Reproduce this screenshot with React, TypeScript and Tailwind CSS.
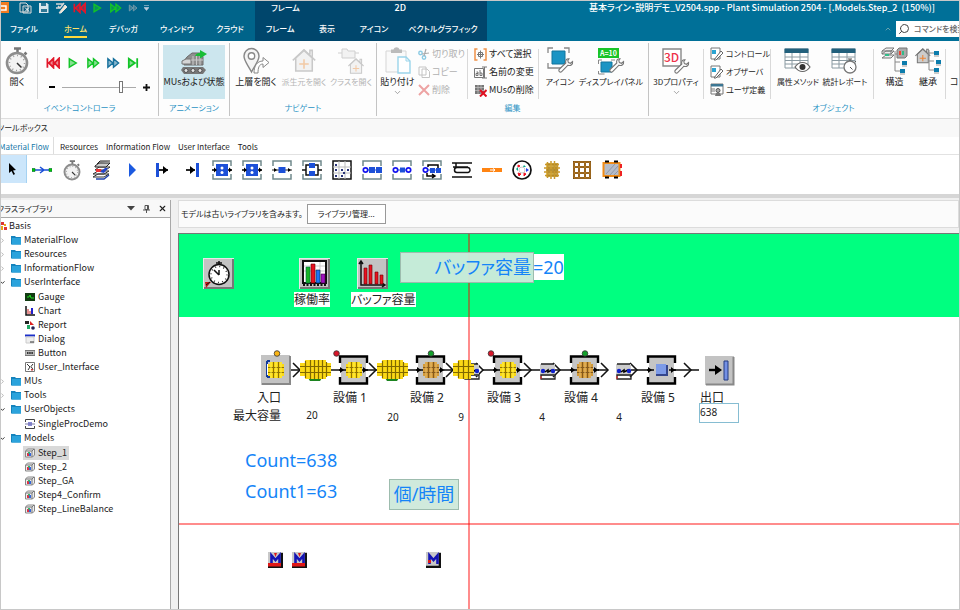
import { useState } from 'react'
import type { ReactNode } from 'react'
import { ChevronDown, ChevronRight, ChevronUp, Search, X } from 'lucide-react'

type IconProps = { w?: number; h?: number; children: ReactNode; box?: string; className?: string }

function Icon({ w = 20, h = 20, box, children, className = '' }: IconProps) {
  return (
    <svg width={w} height={h} viewBox={box ?? `0 0 ${w} ${h}`} fill="none" aria-hidden="true" className={`shrink-0 ${className}`}>
      {children}
    </svg>
  )
}

/* ---------- shared drawings ---------- */

function Stopwatch({ w, h }: { w: number; h: number }) {
  return (
    <Icon w={w} h={h} box="0 0 24 28">
      <path d="M9 1.500h7M12.500 2v4M19.500 5.500l2 2" stroke="#777" strokeWidth="2.500" />
      <circle cx="12" cy="16" r="10" fill="#f3f3f3" stroke="#8d8d8d" strokeWidth="2.600" />
      <circle cx="12" cy="16" r="7.500" stroke="#999" strokeWidth="1.500" strokeDasharray="1 2.900" />
      <path d="M12 16l4.500 4.500" stroke="#333" strokeWidth="1.500" />
    </Icon>
  )
}

function Wrench({ x, y }: { x: number; y: number }) {
  return (
    <path
      transform={`translate(${x} ${y})`}
      d="M11 0.800C8.500 0.500 7 2.500 7.800 5L1.500 11c-1.800 1.800.6 4.200 2.400 2.400L10 7.200c2.800 1 5-1 4.600-3.600L12.500 5.300 10.400 4.600 9.800 2.600z"
      fill="#fff"
      stroke="#777"
      strokeWidth="1.100"
    />
  )
}

function House({ x, y, faded }: { x: number; y: number; faded?: boolean }) {
  return (
    <g transform={`translate(${x} ${y})`} stroke={faded ? '#c9c9c9' : '#777'} strokeWidth="1.300">
      <path d="M3 8v11h14V8L10 1.500z" fill={faded ? '#f2f2f2' : '#ccc'} />
      <path d="M0.500 10L10 1l9.500 9M15 5V1.500h2V7" fill="none" />
      <path d="M10 9v8M6 13h8" stroke={faded ? '#f2c9a5' : '#ee8333'} />
    </g>
  )
}

function BlueNodes({ x, y }: { x: number; y: number }) {
  return (
    <g transform={`translate(${x} ${y})`}>
      <path d="M1 0v20h5M1 11h5M1 3h5" stroke="#888" />
      <path d="M6 1h5v4H6zM8 10h5v4H8zM6 18h5v4H6z" fill="#0b7cac" />
      <path d="M6 6h5M8 15h5M6 23h5" stroke="#999" />
    </g>
  )
}

const stack = (
  <>
    <path d="M1 14l5-3h11l-5 3zM1 17l5-3h11l-5 3zM3 10l4-3h11l-4 3z" fill="#fff" stroke="#333" />
    <path d="M3 6l4-3h11l-4 4H3zM5 4l3-3h10" fill="#ccc" stroke="#222" />
    <path d="M4 9h5v3H4z" fill="#e33" />
    <path d="M8 12l5-4h3l-4 5z" fill="#24c" />
    <path d="M4 19h8l5-4" stroke="#24a" strokeWidth="1.500" />
  </>
)

/* ---------- ribbon ---------- */

const transport = [
  { label: 'リセット', color: '#e2172a', d: 'M1.500 1v10M8 1L3 6l5 5zM14 1L9 6l5 5z', bold: true },
  { label: '開始', color: '#12c427', d: 'M3.500 1.500v9L11 6z' },
  { label: '早送り', color: '#12c427', d: 'M2 1.500v9L7.500 6zM8 1.500v9L13.500 6z' },
  { label: '最速', color: '#16709c', d: 'M2 1.500v9L7.500 6zM8 1.500v9L13.500 6z' },
  { label: 'ステップ', color: '#12c427', d: 'M3 1.500v9L9.500 6zM12 1v10', bold: true },
]

function Transport({ index, size = 14 }: { index: number; size?: number }) {
  const t = transport[index]
  return (
    <Icon w={size} h={12} box="0 0 15 12">
      <path d={t.d} stroke={t.color} strokeWidth={t.bold ? 1.900 : 1.500} fill={t.color} fillOpacity={0.5} />
    </Icon>
  )
}

type BigButtonProps = { icon: ReactNode; label: string; className: string; faded?: boolean; arrow?: boolean; small?: boolean }

function BigButton({ icon, label, className, faded, arrow, small }: BigButtonProps) {
  return (
    <button type="button" disabled={faded} className={`flex h-[54px] shrink-0 flex-col items-center whitespace-nowrap ${className} ${faded ? 'text-[#b5b5b5]' : ''}`}>
      <span className="flex h-[30px] items-end justify-center">{icon}</span>
      <span className={small ? 'mt-px text-[8px] leading-3' : 'mt-px leading-3'}>{label}</span>
      {arrow && <ChevronDown size={9} className="text-[#888]" />}
    </button>
  )
}

function SmallButton({ icon, label, faded, small }: { icon: ReactNode; label: string; faded?: boolean; small?: boolean }) {
  return (
    <button type="button" disabled={faded} className={`flex h-[18px] items-center gap-0.5 whitespace-nowrap ${small ? 'text-[8px]' : ''} ${faded ? 'text-[#b0b0b0]' : ''}`}>
      {icon}
      {label}
    </button>
  )
}

function Group({ label, className, children }: { label: string; className: string; children: ReactNode }) {
  return (
    <section aria-label={label} className={`my-0.5 flex shrink-0 flex-col border-r border-[#c4c4c4] ${className}`}>
      <div className="flex h-[58px] items-start pt-0.5">{children}</div>
      <div className="text-center text-[8px] leading-4 text-[#2b93c4]">{label}</div>
    </section>
  )
}

const Divider = () => <div className="mt-1 h-[50px] w-px shrink-0 bg-[#d9d9d9]" />

const editIcon = (
  <Icon w={14} h={14}>
    <path d="M1 1h9v11H1z" fill="#fff" stroke="#777" />
    <path d="M2 3h4v4H2z" fill="#2aa4d2" />
    <path d="M4 13l7-9 2 2-7 7z" fill="#fff" stroke="#666" />
  </Icon>
)

function Ribbon() {
  const [speed, setSpeed] = useState(82)
  return (
    <div className="flex h-[78px] overflow-hidden border-b border-[#dedede] bg-[#fdfdfd] text-[9px] text-[#222]">
      <Group label="イベントコントローラ" className="w-[158px]">
        <BigButton icon={<Stopwatch w={24} h={28} />} label="開く" className="w-[32px]" />
        <div className="ml-1"><Divider /></div>
        <div className="flex flex-1 flex-col pt-3 pl-2">
          <div className="flex gap-1.5">
            {transport.map((t, i) => (
              <button key={t.label} type="button" aria-label={t.label}>
                <Transport index={i} />
              </button>
            ))}
          </div>
          <div className="mt-3 flex items-center gap-1">
            <button type="button" aria-label="遅く" className="flex h-3 w-3 items-center justify-center">
              <span className="h-0.5 w-1.5 bg-black" />
            </button>
            <input
              type="range"
              aria-label="速度"
              value={speed}
              onChange={e => setSpeed(Number(e.target.value))}
              className="h-3 w-[74px] appearance-none bg-[linear-gradient(#aaa,#aaa)] bg-[length:100%_1px] bg-center bg-no-repeat [&::-webkit-slider-thumb]:h-3 [&::-webkit-slider-thumb]:w-1 [&::-webkit-slider-thumb]:appearance-none [&::-webkit-slider-thumb]:border [&::-webkit-slider-thumb]:border-[#777] [&::-webkit-slider-thumb]:bg-white"
            />
            <button type="button" aria-label="速く" className="flex h-3 w-3 items-center justify-center">
              <Icon w={7} h={7}><path d="M0 3.500h7M3.500 0v7" stroke="#111" strokeWidth="1.800" /></Icon>
            </button>
          </div>
        </div>
      </Group>

      <Group label="アニメーション" className="w-[71px]">
        <BigButton
          className="ml-1 w-[62px] bg-[#cce6ee]"
          label="MUsおよび状態"
          icon={
            <Icon w={28} h={25}>
              <path d="M7 7l5-4h9l2 4v8H4v-4z" fill="#8f8f8f" stroke="#6a6a6a" />
              <path d="M2 11l4-2h5v5H2z" fill="#d5d5d5" stroke="#777" />
              <path d="M13 6v9M16.500 6v9M20 6v9M11 10h12" stroke="#c9c9c9" />
              <path d="M3 17h20l3 3-3 4H4l-3-4z" fill="#777" />
              <circle cx="6" cy="20.500" r="2" fill="#e4e4e4" stroke="#555" />
              <circle cx="13" cy="20.500" r="2" fill="#e4e4e4" stroke="#555" />
              <circle cx="20" cy="20.500" r="2" fill="#e4e4e4" stroke="#555" />
              <path d="M15 6c1-2.500 3-3 5-3V0l7 4-7 4.500V6z" fill="#18bd36" />
            </Icon>
          }
        />
      </Group>

      <Group label="ナビゲート" className="w-[147px]">
        <BigButton
          className="ml-0.5 w-[48px]"
          label="上層を開く"
          icon={
            <Icon w={27} h={28}>
              <path d="M8.500 25C5 18 1 14 1 9a7.500 7.500 0 0115 0c0 5-4 9-7.500 16z" fill="#f5f5f5" stroke="#888" strokeWidth="1.400" />
              <circle cx="8.500" cy="9" r="3.200" fill="#fff" stroke="#888" strokeWidth="1.400" />
              <path d="M11 26c0-7 3-12 9-12v-3.500l6 5-6 5V17c-4 0-5 4-5 9z" fill="#fff" stroke="#888" />
            </Icon>
          }
        />
        <BigButton
          faded
          small
          className="w-[48px]"
          label="派生元を開く"
          icon={<Icon w={26} h={28} box="-1 0 22 21"><House x={0} y={0} faded /></Icon>}
        />
        <BigButton
          faded
          small
          className="w-[46px]"
          label="クラスを開く"
          icon={
            <Icon w={26} h={28}>
              <path d="M4 2h5l1 2h7v7H4zM0 6h4M17 6h4" fill="#f2f2f2" stroke="#cfcfcf" />
              <g transform="translate(10 11) scale(.8)"><House x={0} y={0} faded /></g>
            </Icon>
          }
        />
      </Group>

      <Group label="編集" className="w-[272px]">
        <BigButton
          arrow
          className="w-[41px]"
          label="貼り付け"
          icon={
            <Icon w={26} h={28}>
              <path d="M1 4h20v21H1z" fill="#fafafa" stroke="#d5d5d5" />
              <path d="M6 6V2.500h2.500c1-3 5-3 6 0H17V6z" fill="#bbb" />
              <path d="M13 10h8l4 4v12H13z" fill="#fff" stroke="#9ad4ea" strokeWidth="1.400" />
              <path d="M21 10v4h4" stroke="#9ad4ea" />
            </Icon>
          }
        />
        <div className="flex w-[49px] shrink-0 flex-col">
          <SmallButton
            faded
            label="切り取り"
            icon={
              <Icon w={12} h={12}>
                <circle cx="2.500" cy="5" r="1.700" stroke="#8ccbe4" strokeWidth="1.400" />
                <circle cx="6" cy="9.500" r="1.700" stroke="#8ccbe4" strokeWidth="1.400" />
                <path d="M4 6l7-1M6 8L8 1" stroke="#aaa" strokeWidth="1.200" />
              </Icon>
            }
          />
          <SmallButton
            faded
            label="コピー"
            icon={<Icon w={12} h={12}><path d="M1 1h7v8H1zM4 3h5l2.500 2.500V11.500H4z" fill="#fff" stroke="#c4c4c4" /></Icon>}
          />
          <SmallButton
            faded
            label="削除"
            icon={<Icon w={12} h={12}><path d="M1 1l10 10M11 1L1 11" stroke="#eda3a3" strokeWidth="2" /></Icon>}
          />
        </div>
        <Divider />
        <div className="flex w-[70px] shrink-0 flex-col pl-1.5">
          <SmallButton
            label="すべて選択"
            icon={
              <Icon w={13} h={13}>
                <path d="M3.500 1H1v11h2.500M9.500 1H12v11H9.500" stroke="#ef9148" strokeWidth="1.500" />
                <path d="M6.500 2.500v8M3 6.500h7M4.500 4.500h4v4h-4z" stroke="#777" />
              </Icon>
            }
          />
          <SmallButton
            label="名前の変更"
            icon={
              <Icon w={13} h={13}>
                <path d="M.5 2.500h9v9h-9zM8 1h5M10.500 1v11M8 12h5" stroke="#777" />
                <path d="M2.500 6h1.500v3.500h-2v-2h2M6 4v5.500h2v-2.500H6" stroke="#555" strokeWidth=".8" />
              </Icon>
            }
          />
          <SmallButton
            label="MUsの削除"
            icon={
              <Icon w={13} h={13}>
                <path d="M1 1h9v9H1z" fill="#777" />
                <path d="M1 3.500h9M1 6.500h9M4 1v9M7 1v9" stroke="#bbb" strokeWidth=".8" />
                <path d="M6 6l6.500 6.500M12.500 6L6 12.500" stroke="#e01020" strokeWidth="2" />
              </Icon>
            }
          />
        </div>
        <Divider />
        <BigButton
          small
          className="w-[42px]"
          label="アイコン"
          icon={
            <Icon w={27} h={28}>
              <path d="M5 4h13v13H5z" fill="#1b94c4" stroke="#12749c" />
              <path d="M1 6V1h5M17 1h5v5M1 16v5h5M1 21h14" stroke="#888" strokeWidth="1.300" />
              <Wrench x={11} y={11} />
            </Icon>
          }
        />
        <BigButton
          small
          className="w-[60px]"
          label="ディスプレイパネル"
          icon={
            <Icon w={27} h={28}>
              <path d="M0 1h21v10H0z" fill="#19c428" />
              <path d="M3 15h11v10H3z" fill="#1b94c4" stroke="#12749c" />
              <path d="M.5 17v-4H4M13 13h4M.5 24v3h6" stroke="#888" />
              <Wrench x={11} y={11} />
              <text x="2" y="8.500" fontSize="7" fontWeight="700" fill="#fff">A=10</text>
            </Icon>
          }
        />
      </Group>

      <Group label="オブジェクト" className="w-[370px]">
        <BigButton
          arrow
          small
          className="w-[54px]"
          label="3Dプロパティ"
          icon={
            <Icon w={28} h={28}>
              <path d="M1 2h18v17H1z" fill="#fff" stroke="#888" strokeWidth="1.400" />
              <text x="2" y="15" fontSize="12" fontWeight="500" fill="#ee3148">3D</text>
              <Wrench x={12} y={12} />
            </Icon>
          }
        />
        <Divider />
        <div className="flex w-[66px] shrink-0 flex-col pl-1.5">
          <SmallButton small label="コントロール" icon={editIcon} />
          <SmallButton small label="オブザーバ" icon={editIcon} />
          <SmallButton
            small
            label="ユーザ定義"
            icon={
              <Icon w={14} h={14}>
                <path d="M1 1h12v10H1zM1 6h4M1 8h4" fill="#fff" stroke="#777" />
                <path d="M1 1h12v2.500H1z" fill="#3c7693" />
                <circle cx="8" cy="7.500" r="2" fill="#aaa" stroke="#555" />
                <path d="M5 13l1-3h4l1 3z" fill="#777" />
              </Icon>
            }
          />
        </div>
        <Divider />
        <BigButton
          small
          className="ml-1 w-[46px]"
          label="属性メソッド"
          icon={
            <Icon w={28} h={28}>
              <path d="M1 2h23v19H1zM1 10h23M1 13.500h23M1 17h23M8 5v16M16 5v16" fill="#fff" stroke="#8a9aa2" />
              <path d="M.5 1.500h24V6H.5z" fill="#22607c" />
              <path d="M11 20c4-6 11-6 15 0-4 6-11 6-15 0z" fill="#fff" stroke="#666" strokeWidth="1.200" />
              <circle cx="18.500" cy="20" r="3" fill="#333" />
            </Icon>
          }
        />
        <BigButton
          small
          className="w-[48px]"
          label="統計レポート"
          icon={
            <Icon w={28} h={28}>
              <path d="M1 2h23v19H1zM1 10h23M1 13.500h23M1 17h23M8 5v16M16 5v16" fill="#fff" stroke="#8a9aa2" />
              <path d="M.5 1.500h24V6H.5z" fill="#22607c" />
              <circle cx="19" cy="20" r="6" fill="#fff" stroke="#777" strokeWidth="1.300" />
              <path d="M17 12h4M19 12v2M19 20l2.500 2.500M24 14l1 1" stroke="#555" />
            </Icon>
          }
        />
        <div className="ml-1"><Divider /></div>
        <BigButton
          className="ml-1 w-[33px]"
          label="構造"
          icon={
            <Icon w={27} h={28}>
              <path d="M1 4l4-3h8l-3 3zM1 7l4-3h8l-3 3zM1 11l4-3h8l-3 3zM1 4v3M10 4v3" fill="#eee" stroke="#777" />
              <path d="M4 7h4v2H4z" fill="#3b8" />
              <BlueNodes x={13} y={4} />
              <path d="M16 3l2-2h8v8l-2 2h-8z" fill="#aaa" stroke="#777" />
              <path d="M18 4h2v4h-2z" fill="#e43" />
              <path d="M21 4h2v4h-2z" fill="#3b8" />
            </Icon>
          }
        />
        <BigButton
          className="w-[34px]"
          label="継承"
          icon={
            <Icon w={27} h={28}>
              <g transform="translate(0 1) scale(.78)"><House x={0} y={0} /></g>
              <BlueNodes x={13} y={3} />
            </Icon>
          }
        />
        <Divider />
        <button type="button" className="ml-1 w-[48px] shrink-0 pt-[31px] text-left leading-3 whitespace-nowrap">コンテンツ</button>
      </Group>
    </div>
  )
}

/* ---------- title bar ---------- */

const mainTabs = ['ファイル', 'ホーム', 'デバッガ', 'ウィンドウ', 'クラウド']
const frameTabs = ['フレーム', '表示', 'アイコン', 'ベクトルグラフィック']

function TitleBar() {
  const [active, setActive] = useState('ホーム')
  return (
    <header className="grid h-10 grid-cols-[254px_232px_1fr] overflow-hidden text-[8px] font-medium whitespace-nowrap text-white">
      <div className="flex flex-col bg-[#00648a]">
        <div className="flex h-3.5 items-center">
          <Icon w={9} h={12} className="mr-1.5">
            <path d="M0 0h8v11H0z" fill="#f07c22" />
            <path d="M0 4h5v4H0" stroke="#fff" strokeWidth="1.500" />
          </Icon>
          <button type="button" aria-label="閉じる" className="flex w-[18px] justify-center">
            <Icon w={13} h={12}>
              <path d="M1 1h6l2 2v7H1zM4 4h8v7H4z" fill="#0a5c7c" stroke="#ddd" />
              <path d="M6 5.500l4 4M10 5.500l-4 4" stroke="#fff" />
            </Icon>
          </button>
          <button type="button" aria-label="保存" className="flex w-[18px] justify-center">
            <Icon w={11} h={12}>
              <path d="M1 1h8l1.500 1.500V11H1z" fill="#d9e6ec" />
              <path d="M3 1h5v3H3zM3 7h6v3H3z" fill="#2e7896" />
            </Icon>
          </button>
          <button type="button" aria-label="編集" className="flex w-[18px] justify-center">
            <Icon w={13} h={12}>
              <path d="M1 2h7M1 6h4M3 4l2 2 4-5" stroke="#d8d8d8" strokeWidth="1.500" />
              <path d="M4 11l6-8 2 2-6 6z" fill="#f6e8d2" stroke="#ddd" />
            </Icon>
          </button>
          {[0, 1, 2, 3].map(i => (
            <button
              key={i}
              type="button"
              aria-label={transport[i].label}
              className={i === 3 ? 'flex w-[18px] justify-center opacity-60 brightness-200 grayscale' : 'flex w-[18px] justify-center'}
            >
              <Transport index={i} size={i === 3 ? 10 : 13} />
            </button>
          ))}
          <Icon w={5} h={6} className="ml-0.5"><path d="M0 .5h5M0 2.500h5L2.500 5.500z" stroke="#bcd" strokeWidth=".6" fill="#bcd" /></Icon>
        </div>
        <nav className="grid flex-1 grid-cols-[46px_57px_39px_68px_38px]">
          {mainTabs.map(tab => (
            <button key={tab} type="button" onClick={() => setActive(tab)} className="flex flex-col items-center pt-2">
              <span className={active === tab ? 'border-b-2 border-[#ffd83c] pb-px leading-3 text-[#ffe26a]' : 'leading-3'}>{tab}</span>
            </button>
          ))}
        </nav>
      </div>
      <div className="flex flex-col bg-[#00466c]">
        <div className="flex h-3.5 items-center justify-between pr-[81px] pl-4">
          <span>フレーム</span>
          <span className="text-[9px]">2D</span>
        </div>
        <nav className="grid flex-1 grid-cols-[50px_44px_50px_88px]">
          {frameTabs.map(tab => (
            <button key={tab} type="button" onClick={() => setActive(tab)} className="flex flex-col items-center pt-2">
              <span className="leading-3">{tab}</span>
            </button>
          ))}
        </nav>
      </div>
      <div className="flex flex-col bg-[#007098]">
        <h1 className="h-3.5 pr-6 text-right text-[9px] leading-3.5">基本ライン・説明デモ_V2504.spp - Plant Simulation 2504 - [.Models.Step_2&nbsp; (150%)]</h1>
        <div className="mt-1.5 flex justify-end">
          <button type="button" aria-label="リボンを折りたたむ" className="mr-1">
            <ChevronUp size={8} className="text-[#9bb]" />
          </button>
          <label className="flex h-4 w-[63px] items-center gap-1 overflow-hidden bg-white pl-0.5 text-[#444]">
            <Search size={12} className="shrink-0 -scale-x-100" />
            <input type="search" placeholder="コマンドを検索" aria-label="コマンドを検索" className="w-20 shrink-0 text-[8px] placeholder:text-[#666]" />
          </label>
        </div>
      </div>
    </header>
  )
}

/* ---------- toolbox ---------- */

const frame = <path d="M1 6V1h18v5M1 14v5h18v-5" stroke="#70898c" strokeWidth="1.500" />
const blueRow = (
  <>
    <circle cx="3.500" cy="10" r="2.200" stroke="#1414f0" strokeWidth="1.700" />
    <path d="M6 10h13" stroke="#1c50d8" />
  </>
)

const storeIcon = (
  <>
    {frame}
    <path d="M4 4h12v12H4z" fill="#1c50d8" />
    <path d="M0 10h4M16 10h4" stroke="#000" strokeWidth="1.500" />
    <path d="M2 7.500L5 10l-3 2.500zM17 7.500L20 10l-3 2.500z" fill="#000" />
    <circle cx="10" cy="8" r="1.500" fill="#fff" />
    <circle cx="10" cy="12.500" r="1.500" fill="#fff" />
  </>
)

const tools: { name: string; art: ReactNode }[] = [
  {
    name: 'コネクタ',
    art: (
      <>
        <path d="M0 10h20M8 7l4 3-4 3" stroke="#1c50d8" strokeWidth="1.500" />
        <path d="M0 8.500h3v3H0zM17 8.500h3v3h-3z" fill="#0c0" stroke="#063" strokeWidth=".6" />
      </>
    ),
  },
  { name: 'イベントコントローラ', art: null },
  { name: 'フレーム', art: stack },
  { name: 'インターフェース', art: <path d="M7 3v14l7-7z" fill="#1c5ae0" /> },
  {
    name: 'ソース',
    art: (
      <>
        <path d="M4 3h3v14H4z" fill="#1c50d8" />
        <path d="M7 10h9" stroke="#000" strokeWidth="1.700" />
        <path d="M11 6l5 4-5 4z" fill="#000" />
      </>
    ),
  },
  {
    name: 'ドレイン',
    art: (
      <>
        <path d="M14 3h3v14h-3z" fill="#1c50d8" />
        <path d="M4 10h9" stroke="#000" strokeWidth="1.700" />
        <path d="M8 6l5 4-5 4z" fill="#000" />
      </>
    ),
  },
  { name: 'ステーション', art: storeIcon },
  { name: '並列ステーション', art: storeIcon },
  {
    name: '組立',
    art: (
      <>
        {frame}
        <path d="M0 10h20" stroke="#222" />
        <path d="M2 8l3 2-3 2zM16 8l3 2-3 2z" fill="#000" />
        <path d="M6.500 7h7v6h-7z" fill="#1c50d8" />
      </>
    ),
  },
  {
    name: '分解',
    art: (
      <>
        {frame}
        <path d="M0 10h4M16 10h4M7 5H4v10h3M13 5h3v10h-3" stroke="#111" strokeWidth="1.500" />
        <path d="M7 3h6v5H7zM7 11h6v5H7z" fill="#1c50d8" />
      </>
    ),
  },
  {
    name: 'ストア',
    art: (
      <>
        <path d="M1 1h18v18H1z" stroke="#111" strokeWidth="1.500" />
        <path d="M7 1v18M13 1v18M1 7h18M1 13h18" stroke="#bbb" />
        <path d="M3 4h2v2H3zM3 9h2v2H3zM9 9h2v2H9zM15 9h2v2h-2zM3 15h2v2H3zM9 15h2v2H9zM11 12h2v2h-2z" fill="#2a3478" />
      </>
    ),
  },
  { name: 'バッファ', art: <>{frame}{blueRow}<path d="M7 7h6v6H7zM14 7h6v6h-6z" fill="#1c50d8" /></> },
  {
    name: 'ソーター',
    art: (
      <>
        {frame}
        {blueRow}
        <path d="M8 7.500h5v5H8z" fill="#1c50d8" />
        <circle cx="16.500" cy="10" r="2.200" fill="#fff" stroke="#1414f0" strokeWidth="1.700" />
      </>
    ),
  },
  {
    name: 'サイクル',
    art: (
      <>
        {frame}
        <path d="M6 7V5h10v3M5 13v3h7M10 14l3 2-3 2" stroke="#000" strokeWidth="1.500" />
        {blueRow}
        <path d="M8 8h5v5H8zM14 8h5v5h-5z" fill="#1c50d8" />
      </>
    ),
  },
  {
    name: 'コンベヤ',
    art: (
      <>
        <path d="M0 3h20M0 17h20" stroke="#111" strokeWidth="1.700" />
        <path d="M1 7h15M18 9.500a2.500 2.500 0 01-2 3H5a2.500 2.500 0 010-5h11a2.500 2.500 0 012 2M4 3v4" stroke="#111" strokeWidth="1.500" />
      </>
    ),
  },
  {
    name: 'トラック',
    art: (
      <>
        <path d="M0 8h20v4H0z" fill="#ff8412" />
        <path d="M8 10h5M11 8.500l2 1.500-2 1.500" stroke="#fff" />
      </>
    ),
  },
  {
    name: 'ターンテーブル',
    art: (
      <>
        <circle cx="10" cy="10" r="9" stroke="#111" strokeWidth="1.700" />
        <circle cx="10" cy="10" r="3" stroke="#ccc" />
        <path d="M4 9l2-2v4zM12 5l2 2h-3z" fill="#0a8" />
        <path d="M6 5l2 1-2 1zM6 13l3 1-2 2zM12 13l2 1-2 2z" fill="#e12" stroke="#e12" />
        <path d="M14 8l3 2-3 2z" fill="#24e" />
      </>
    ),
  },
  {
    name: '部品',
    art: (
      <>
        <path d="M4 3h12v14H4z" fill="#e8c860" />
        <path d="M3 4.500h14M2 8h16M2 12h16M3 15.500h14M5.500 2v16M9 1v18M12.500 1v18M15.500 3v14" stroke="#c8982c" strokeWidth="1.500" />
        <path d="M7 3v14M11 3v14M14 3v14M4 10h12" stroke="#97701c" strokeWidth=".7" />
      </>
    ),
  },
  {
    name: 'コンテナ',
    art: (
      <>
        <path d="M2 2h16v16H2zM7 2v16M13 2v16M2 7h16M2 13h16" stroke="#7a4c10" strokeWidth="2" />
        <path d="M2 2h16v16H2zM7 2v16M13 2v16M2 7h16M2 13h16" stroke="#c98c30" strokeWidth=".8" />
      </>
    ),
  },
  {
    name: '搬送機',
    art: (
      <>
        <path d="M1.500 3h16v13h-16z" fill="#b5bcc8" stroke="#f08c18" strokeWidth="2" />
        <path d="M4 14l9-10M8 15l8-9M12 15l4-4" stroke="#8f98a8" />
        <path d="M3 1.500h4M12 1.500h4M3 17.500h4M12 17.500h4" stroke="#000" strokeWidth="2" />
        <path d="M19 4v4M19 11v5" stroke="#e22" strokeWidth="2" />
      </>
    ),
  },
]

const toolTabs = ['Material Flow', 'Resources', 'Information Flow', 'User Interface', 'Tools']

function Toolbox() {
  const [tab, setTab] = useState('Material Flow')
  return (
    <section aria-label="ツールボックス" className="overflow-hidden border-b-4 border-[#d6d6d6] bg-white">
      <h2 className="-ml-1 h-[18px] bg-[#f8f8f8] text-[8px] leading-[18px] text-[#222]">ツールボックス</h2>
      <div className="-ml-0.5 flex h-[18px] border-b border-[#e2e2e2] text-[8px] text-[#222]">
        {toolTabs.map(t => (
          <button
            key={t}
            type="button"
            onClick={() => setTab(t)}
            className={`pt-0.5 whitespace-nowrap ${t === tab ? 'mr-0.5 border-r border-[#ddd] pr-1 text-[#1678a8]' : 'px-1'}`}
          >
            {t}
          </button>
        ))}
      </div>
      <div className="flex h-[39px] items-start">
        <button type="button" aria-label="選択" className="flex h-7 w-[26px] items-center justify-center border-r border-[#a5d2f2] bg-[#cce6fb] pr-1">
          <Icon w={10} h={12}><path d="M2 0v10l2.500-2 2 4 1.500-1-2-3.500L9 7z" fill="#000" /></Icon>
        </button>
        {tools.map((t, i) => (
          <button key={t.name} type="button" aria-label={t.name} className="flex h-7 w-[30px] items-center justify-center pt-0.5">
            {i === 1 ? <Stopwatch w={20} h={21} /> : <Icon>{t.art}</Icon>}
          </button>
        ))}
      </div>
    </section>
  )
}

/* ---------- class library ---------- */

const folderIcon = (
  <Icon w={10} h={10}>
    <path d="M0 1h4l1 1h5v7.500H0z" fill="#1583bd" />
    <path d="M1 3h9v6.500H1z" fill="#2ba3dc" />
  </Icon>
)

const leafIcons: Record<string, ReactNode> = {
  gauge: <><path d="M0 1h10v8H0z" fill="#123c12" /><path d="M2 5h2l1-2 1 3h3" stroke="#2d2" /></>,
  chart: <><path d="M1 0v9h9" stroke="#111" strokeWidth="1.500" /><path d="M3 8V3M5 8V5" stroke="#c22" /><path d="M7 2v6" stroke="#22c" strokeWidth="2" /></>,
  report: <><path d="M0 1h4v3H0z" fill="#222" /><path d="M5 1l4 4H5z" fill="#d22" /><path d="M2 5h3v4H2z" fill="#2a6" /><circle cx="8" cy="8" r="1.800" fill="#225" /></>,
  dialog: <><path d="M0 .5h10v2H0z" fill="#1b2fc8" /><path d="M1 3h8v6H1z" fill="#eee" stroke="#ccc" /><path d="M5 8h4" stroke="#333" /></>,
  button: <><path d="M0 2.500h10v5H0z" fill="#bbb" stroke="#777" /><path d="M2 5h6" stroke="#333" strokeDasharray="1.500 .7" strokeWidth="2" /></>,
  ui: <><path d="M.5.5h9v9h-9z" fill="#fff" stroke="#777" /><path d="M2 2l3 3-2 3M8 2L6 4.500l2 3" stroke="#333" /><path d="M6 7h2v1.500H6z" fill="#c33" /></>,
  station: <><path d="M.5 3V.5h9V3M.5 7v2.500h9V7" stroke="#444" /><path d="M3 3h4v4H3z" fill="#8a8ad8" /><path d="M0 5h10" stroke="#77a" /></>,
  model: <><path d="M.5 3l2-2h7v6l-2 2h-7z" fill="#eee" stroke="#888" /><path d="M1 3h6v6M7 3l2-2" stroke="#777" /><path d="M2 5h2v3H2z" fill="#d34" /><path d="M4 5h2v3H4z" fill="#36d" /><path d="M3 4h2v1.500H3z" fill="#3b6" /></>,
}

type Leaf = { name: string; icon: string }
type Folder = { name: string; items?: Leaf[] }

const folders: Folder[] = [
  { name: 'MaterialFlow' },
  { name: 'Resources' },
  { name: 'InformationFlow' },
  {
    name: 'UserInterface',
    items: [
      { name: 'Gauge', icon: 'gauge' },
      { name: 'Chart', icon: 'chart' },
      { name: 'Report', icon: 'report' },
      { name: 'Dialog', icon: 'dialog' },
      { name: 'Button', icon: 'button' },
      { name: 'User_Interface', icon: 'ui' },
    ],
  },
  { name: 'MUs' },
  { name: 'Tools' },
  { name: 'UserObjects', items: [{ name: 'SingleProcDemo', icon: 'station' }] },
  {
    name: 'Models',
    items: ['Step_1', 'Step_2', 'Step_GA', 'Step4_Confirm', 'Step_LineBalance'].map(name => ({ name, icon: 'model' })),
  },
]

function ClassLibrary() {
  const [selected, setSelected] = useState('Step_1')
  return (
    <aside className="flex w-[170px] shrink-0 flex-col overflow-hidden border-r border-[#a8a8a8] bg-white text-[9px] text-[#222]">
      <div className="flex h-[18px] items-center border-b border-[#a8a8a8] bg-[#f8f8f8] pr-[3px]">
        <h2 className="-ml-1 flex-1 text-[8px]">クラスライブラリ</h2>
        <div className="flex items-center gap-2">
          <button type="button" aria-label="メニュー"><Icon w={8} h={5}><path d="M0 0h8L4 4.500z" fill="#444" /></Icon></button>
          <button type="button" aria-label="固定">
            <Icon w={7} h={8}><path d="M2 .5h3.500v4H2zM4.500.5v4M0 5h7M3.500 5v3" stroke="#555" /></Icon>
          </button>
          <button type="button" aria-label="閉じる"><X size={9} strokeWidth={3} /></button>
        </div>
      </div>
      <div className="flex h-[14px] items-center gap-0.5 pt-0.5 leading-[14px]">
        <Icon w={6} h={10}><path d="M0 1h3v3H0zM3 6h3v3H3z" fill="#d33" /><path d="M0 5h2v4H0zM3 3h2v2H3z" fill="#e9a417" /></Icon>
        Basis
      </div>
      <ul className="pt-px">
        {folders.map(f => (
          <li key={f.name}>
            <div className="flex h-[14px] items-center leading-[14px]">
              <span className="-ml-0.5 w-3">
                {f.items ? <ChevronDown size={7} strokeWidth={3} /> : <ChevronRight size={7} className="text-[#888]" />}
              </span>
              {folderIcon}
              <span className="pl-[3px]">{f.name}</span>
            </div>
            {f.items && (
              <ul className="pt-px pl-[22px]">
                {f.items.map(item => (
                  <li key={item.name}>
                    <button
                      type="button"
                      onClick={() => setSelected(item.name)}
                      className={`flex h-[14px] items-center gap-[3px] px-0.5 leading-[14px] ${selected === item.name ? 'bg-[#d9d9d9]' : ''}`}
                    >
                      <Icon w={10} h={10}>{leafIcons[item.icon]}</Icon>
                      {item.name}
                    </button>
                  </li>
                ))}
              </ul>
            )}
          </li>
        ))}
      </ul>
    </aside>
  )
}

/* ---------- model canvas ---------- */

function Crate({ x, y, dark }: { x: number; y: number; dark?: boolean }) {
  return (
    <g transform={`translate(${x} ${y})`}>
      <path d="M2 0h12v2h2v12h-2v2H2v-2H0V2h2z" fill={dark ? '#d29a3a' : '#fbd916'} />
      <path d="M0 5.500h16M0 10.500h16M5.500 0v16M10.500 0v16" stroke={dark ? '#85591a' : '#8f7300'} strokeWidth="1.100" />
      <path d="M3 0v16M8 0v16M13 0v16" stroke={dark ? '#e8bd6c' : '#fff04a'} />
    </g>
  )
}

function Bevel() {
  return (
    <>
      <path d="M0 0h31v31H0z" fill="#c3c3c3" />
      <path d="M0 31V0h31" stroke="#e8e8e8" strokeWidth="2" />
      <path d="M1 30h29V1" stroke="#777" strokeWidth="2" />
    </>
  )
}

function Station({ x, kind }: { x: number; kind: 'yellow' | 'brown' | 'empty' }) {
  return (
    <g transform={`translate(${x} 121)`}>
      <path d="M2 2h25v26H2z" fill="#c5c5c5" />
      <path d="M1 8V1.500h27V8M1 22v6.500h27V22" stroke="#000" strokeWidth="2.400" />
      <path d="M0 15h7M22 15h7" stroke="#000" strokeWidth="1.500" />
      <path d="M1 12l4 3-4 3zM24 12l4 3-4 3z" fill="#000" />
      {kind === 'empty' ? (
        <>
          <path d="M9 10h12v11H9z" fill="#34468c" />
          <path d="M9 9h10v10H9z" fill="#7d9be8" />
        </>
      ) : (
        <Crate x={7} y={7} dark={kind === 'brown'} />
      )}
    </g>
  )
}

function Pile({ x, cut }: { x: number; cut?: boolean }) {
  return (
    <g transform={`translate(${x} 126)`}>
      {!cut && <path d="M8 18h14l-2 3H10z" fill="#1c8420" />}
      <path d={cut ? 'M0 3h5V0h13v4h3v11h-3v4H5v-3H0z' : 'M0 3h5V0h21v3h5v13h-5v3H5v-3H0z'} fill="#fbd916" />
      <path
        d={cut ? 'M0 6.500h21M0 12.500h21M5.500 1v17M10.500 0v19M15.500 0v19' : 'M0 6.500h31M0 12.500h31M5.500 1v17M10.500 0v19M14.500 0v19M18.500 0v19M22.500 0v19M26.500 2v15'}
        stroke="#806800"
        strokeWidth="1.200"
      />
    </g>
  )
}

function MiniBuffer({ x }: { x: number }) {
  return (
    <g transform={`translate(${x} 130)`}>
      <path d="M0 0h15v12H0z" fill="#ccc" />
      <path d="M1 0h13M1 11h14v4H1z" stroke="#222" strokeWidth="1.300" />
      <circle cx="3" cy="7" r="2.200" fill="#12c" />
      <path d="M5 8l3-2v2l4-2" stroke="#000" strokeWidth="1.500" />
      <circle cx="13" cy="7" r="2.200" fill="#12c" />
      <path d="M1 12v3" stroke="#e22" />
    </g>
  )
}

function FlowLine() {
  return (
    <svg width="480" height="50" viewBox="80 110 480 50" fill="none" role="img" aria-label="生産ライン" className="absolute top-[110px] left-[80px]">
      <path d="M110 136h16M150 136h24M186 136h20M226 136h13M266 136h12M304 136h17M343 136h26M372 136h22M419 136h10M449 136h25M495 136h25" stroke="#111" strokeWidth="1.400" />
      <path d="M114 129l7 7-7 7M190 129l7 7-7 7M267 129l7 7-7 7M297 129l7 7-7 7M345 129l7 7-7 7M374 129l7 7-7 7M422 129l7 7-7 7M451 129l7 7-7 7M505 129l7 7-7 7" stroke="#111" strokeWidth="1.500" />
      <g transform="translate(82 121)">
        <path d="M0 0h29v30H0z" fill="#c3c3c3" />
        <path d="M1 29h28V1" stroke="#888" strokeWidth="2" />
        <path d="M6 6v16M6 6h3M6 22h3" stroke="#113a9c" strokeWidth="2" />
        <path d="M6 9h4v11H6z" fill="#fff" />
        <Crate x={7} y={7} />
      </g>
      <Pile x={121} />
      <Pile x={198} />
      <MiniBuffer x={285} />
      <Pile x={274} cut />
      <MiniBuffer x={361} />
      <MiniBuffer x={437} />
      <Station x={160} kind="yellow" />
      <Station x={237} kind="brown" />
      <Station x={314} kind="yellow" />
      <Station x={391} kind="brown" />
      <Station x={468} kind="empty" />
      <g transform="translate(526 122)">
        <path d="M0 0h29v29H0z" fill="#c3c3c3" />
        <path d="M1 28.500h27.500V1" stroke="#888" strokeWidth="2" />
        <path d="M4 14h8" stroke="#000" strokeWidth="2.400" />
        <path d="M10 9l7 5-7 5z" fill="#000" />
        <path d="M19 5h4v19h-4z" fill="#7490e4" stroke="#223a80" />
      </g>
      <g stroke="#333" strokeWidth=".8">
        <circle cx="98" cy="119.500" r="2.800" fill="#fab414" />
        <circle cx="157.500" cy="119.500" r="2.800" fill="#d8162a" />
        <circle cx="252" cy="119.500" r="2.800" fill="#12a02a" />
        <circle cx="312" cy="119.500" r="2.800" fill="#d8162a" />
        <circle cx="406" cy="119.500" r="2.800" fill="#12a02a" />
      </g>
    </svg>
  )
}

const labels = [
  { text: '入口', at: 'left-[70px] top-[155px] w-10' },
  { text: '設備 1', at: 'left-[151px] top-[155px] w-10' },
  { text: '設備 2', at: 'left-[228px] top-[155px] w-10' },
  { text: '設備 3', at: 'left-[305px] top-[155px] w-10' },
  { text: '設備 4', at: 'left-[382px] top-[155px] w-10' },
  { text: '設備 5', at: 'left-[459px] top-[155px] w-10' },
  { text: '出口', at: 'left-[513px] top-[155px] w-10' },
  { text: '最大容量', at: 'left-[48px] top-[173px] w-[60px]' },
]

const capacities = [
  { value: 20, at: 'left-[123px] top-[173px]' },
  { value: 20, at: 'left-[204px] top-[175px]' },
  { value: 9, at: 'left-[272px] top-[175px]' },
  { value: 4, at: 'left-[353px] top-[175px]' },
  { value: 4, at: 'left-[430px] top-[175px]' },
]

function MethodIcon({ at, red }: { at: string; red?: boolean }) {
  return (
    <Icon w={15} h={16} className={`absolute ${at}`}>
      <path d="M0 0h15v16H0z" fill="#c8c8c8" />
      <path d="M0 15h14V1" stroke="#111" strokeWidth="2.600" />
      <path d="M3.500 12V3.500L7.500 8l4-4.500V12" stroke="#1414b4" strokeWidth="2.600" />
      {red ? (
        <>
          <path d="M0 11h13v3.500H0z" fill="#e01818" />
          <path d="M6 1h3l-1.500 4z" fill="#e01818" />
        </>
      ) : (
        <path d="M2 8h3v3H2z" fill="#e01818" />
      )}
    </Icon>
  )
}

function Canvas() {
  return (
    <main className="relative min-h-[374px] flex-1 overflow-hidden bg-white font-['Noto_Sans','Noto_Sans_CJK_JP',sans-serif]">
      <div className="h-[83px] bg-[#00ff80]" />
      <div className="absolute inset-y-0 left-[289px] w-0.5 bg-[#ff0000]/45" />
      <div className="absolute inset-x-0 top-[289px] h-0.5 bg-[#ff0000]/45" />

      <Icon w={31} h={31} className="absolute top-[24px] left-[24px]">
        <Bevel />
        <circle cx="16" cy="16.500" r="10" fill="#fff" stroke="#111" strokeWidth="1.500" />
        <circle cx="16" cy="16.500" r="8" stroke="#333" strokeWidth="1.500" strokeDasharray="1 3.190" />
        <path d="M16 17l-5-5M16 17v-5M13 5h6M16 3v4" stroke="#111" strokeWidth="1.500" />
        <path d="M2 24h6l-5 6z" fill="#c41818" />
        <path d="M3 27l4-3" stroke="#111" />
      </Icon>
      <Icon w={31} h={31} className="absolute top-[24px] left-[120px]">
        <Bevel />
        <path d="M4 3h23v22H4z" fill="#fff" stroke="#111" strokeWidth="2" />
        <path d="M5 8h21M5 13h21M21 4v20" stroke="#ccc" />
        <path d="M7 9h4v16H7z" fill="#18b428" stroke="#064" strokeWidth=".6" />
        <path d="M12 6h4v19h-4z" fill="#e81020" stroke="#600" strokeWidth=".6" />
        <path d="M17 12h4v13h-4z" fill="#1c74f4" stroke="#024" strokeWidth=".6" />
        <path d="M22 16h4v9h-4z" fill="#a010c0" stroke="#404" strokeWidth=".6" />
        <path d="M4 27h23" stroke="#111" strokeWidth="2" strokeDasharray="2 1.500" />
      </Icon>
      <Icon w={31} h={31} className="absolute top-[24px] left-[178px]">
        <Bevel />
        <path d="M4 3v24h24M2 6l2-3 2 3M25 25l3 2-3 2" stroke="#111" strokeWidth="1.500" />
        <path d="M7 10h3v16H7zM12 7h3v19h-3zM18 14h3v12h-3zM23 17h3v9h-3z" fill="#e81020" stroke="#600" strokeWidth=".6" />
      </Icon>
      <div className="absolute top-[58px] left-[115px] bg-white text-[12px] leading-[15px] whitespace-nowrap">稼働率</div>
      <div className="absolute top-[58px] left-[172px] bg-white text-[12px] leading-[15px] whitespace-nowrap">バッファ容量</div>

      <div className="absolute top-[20px] left-[354px] bg-white text-[18px] leading-[26px] text-[#1484f8]">=20</div>
      <div className="absolute top-[18px] left-[221px] w-[134px] border border-[#9dbcae] bg-[#d0eadc]/95 pr-0.5 text-right text-[18px] leading-[29px] whitespace-nowrap text-[#1484f8]">
        バッファ容量
      </div>

      <FlowLine />
      {labels.map(l => (
        <div key={l.text} className={`absolute text-center text-[12px] leading-[18px] whitespace-nowrap ${l.at}`}>{l.text}</div>
      ))}
      {capacities.map(c => (
        <div key={c.at} className={`absolute w-5 text-center text-[10px] leading-4 ${c.at}`}>{c.value}</div>
      ))}
      <input
        type="text"
        aria-label="出口の個数"
        defaultValue="638"
        className="absolute top-[169px] left-[520px] h-5 w-10 border border-[#86bdd2] bg-white pb-0.5 text-[10px]"
      />

      <div className="absolute top-[213px] left-[66px] text-[18px] leading-[26px] text-[#1484f8]">Count=638</div>
      <div className="absolute top-[244px] left-[66px] text-[18px] leading-[26px] text-[#1484f8]">Count1=63</div>
      <div className="absolute top-[245px] left-[210px] w-[70px] border border-[#9dbcae] bg-[#d0eadc] text-center text-[18px] leading-[29px] whitespace-nowrap text-[#1484f8]">
        個/時間
      </div>

      <MethodIcon red at="top-[318px] left-[89px]" />
      <MethodIcon red at="top-[318px] left-[113px]" />
      <MethodIcon at="top-[318px] left-[247px]" />
    </main>
  )
}

export default function App() {
  return (
    <div className="flex min-h-screen flex-col overflow-hidden border border-[#c8c8c8] bg-[#f0f0f0] font-['Noto_Sans_CJK_JP',sans-serif] text-[#222] [font-feature-settings:'palt']">
      <TitleBar />
      <Ribbon />
      <Toolbox />
      <div className="flex flex-1 pt-0.5">
        <ClassLibrary />
        <div className="ml-[7px] flex min-w-0 flex-1 flex-col">
          <div className="mb-[5px] flex h-7 items-center gap-1 border border-[#dcdcdc] bg-[#fbfbfb] pl-0.5 text-[8px]">
            <span>モデルは古いライブラリを含みます。</span>
            <button type="button" className="h-5 w-[79px] border border-[#999] bg-white">ライブラリ管理...</button>
          </div>
          <div className="flex flex-1 border-t border-l border-[#777]">
            <Canvas />
          </div>
        </div>
      </div>
    </div>
  )
}
